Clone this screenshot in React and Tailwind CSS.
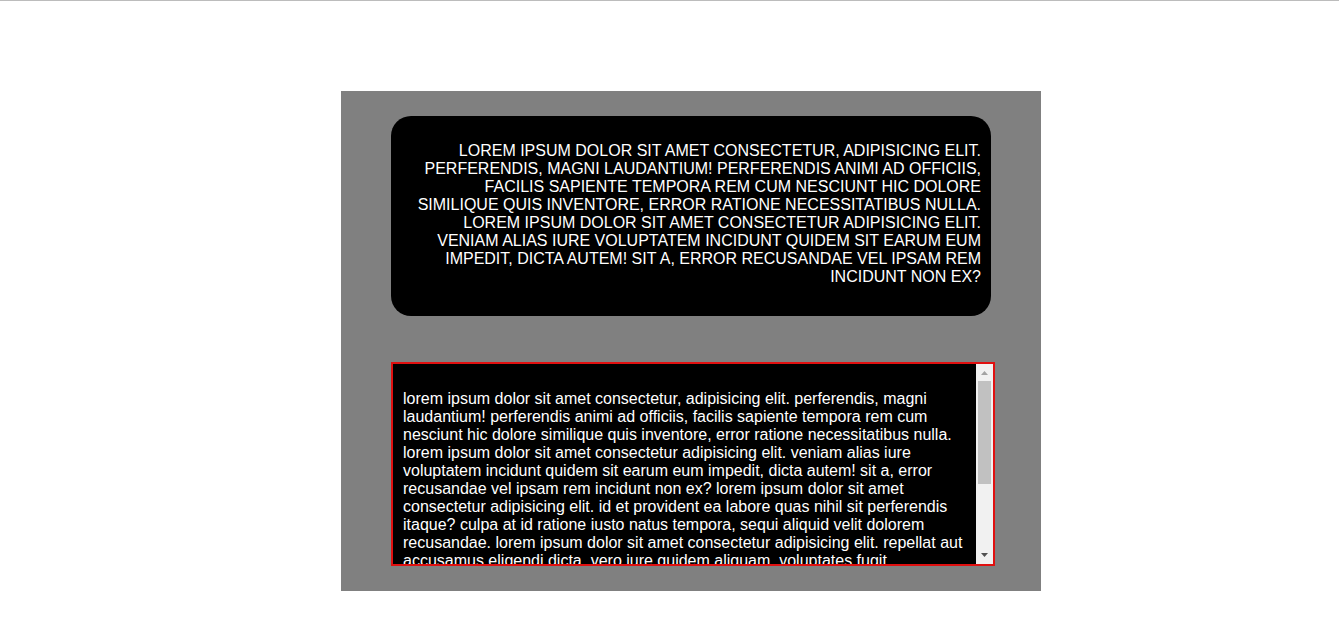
import { useRef } from "react";

function ScrollArrow({ label, points, fill, onClick }) {
  return (
    <button type="button" aria-label={label} onClick={onClick} className="flex h-[17px] w-full shrink-0 items-center justify-center">
      <svg width="17" height="17" viewBox="0 0 17 17" aria-hidden="true">
        <polygon points={points} fill={fill} />
      </svg>
    </button>
  );
}

function ScrollBox({ children }) {
  const view = useRef(null);
  const scroll = (top) => view.current.scrollBy({ top });

  return (
    <section className="flex h-[204px] w-full max-w-[604px] border-2 border-[#e01010] bg-black">
      <div ref={view} tabIndex={0} className="min-w-0 flex-1 overflow-y-auto p-[10px] outline-none [scrollbar-width:none]">
        <p className="my-4 lowercase">{children}</p>
      </div>
      <div className="flex w-[17px] shrink-0 flex-col bg-[#f1f1f1]">
        <ScrollArrow label="Scroll up" points="5,11 12,11 8.5,7" fill="#a3a3a3" onClick={() => scroll(-40)} />
        <div className="flex-1 px-[2px]">
          <div className="h-[103px] bg-[#c1c1c1]" />
        </div>
        <ScrollArrow label="Scroll down" points="5,6 12,6 8.5,10" fill="#505050" onClick={() => scroll(40)} />
      </div>
    </section>
  );
}

export default function App() {
  return (
    <div className="min-h-screen border-t border-[#bcbcbc] bg-white pt-[90px] pl-[43px] font-['Liberation_Sans',Arial,sans-serif] text-[16px] leading-[18px] text-white">
      <main className="mx-auto flex min-h-[500px] w-full max-w-[700px] flex-col gap-[46px] bg-[#808080] pt-[25px] pr-[46px] pb-[25px] pl-[50px]">
        <section className="min-h-[200px] w-full max-w-[600px] rounded-[20px] bg-black p-[10px] text-right uppercase">
          <p className="my-4">
            Lorem ipsum dolor sit amet consectetur, adipisicing elit. Perferendis, magni laudantium! Perferendis animi
            ad officiis, facilis sapiente tempora rem cum nesciunt hic dolore similique quis inventore, error ratione
            necessitatibus nulla. Lorem ipsum dolor sit amet consectetur adipisicing elit. Veniam alias iure voluptatem
            incidunt quidem sit earum eum impedit, dicta autem! Sit a, error recusandae vel ipsam rem incidunt non ex?
          </p>
        </section>
        <ScrollBox>
          Lorem ipsum dolor sit amet consectetur, adipisicing elit. Perferendis, magni laudantium! Perferendis animi ad
          officiis, facilis sapiente tempora rem cum nesciunt hic dolore similique quis inventore, error ratione
          necessitatibus nulla. Lorem ipsum dolor sit amet consectetur adipisicing elit. Veniam alias iure voluptatem
          incidunt quidem sit earum eum impedit, dicta autem! Sit a, error recusandae vel ipsam rem incidunt non ex?
          Lorem ipsum dolor sit amet consectetur adipisicing elit. Id et provident ea labore quas nihil sit perferendis
          itaque? Culpa at id ratione iusto natus tempora, sequi aliquid velit dolorem recusandae. Lorem ipsum dolor
          sit amet consectetur adipisicing elit. Repellat aut accusamus eligendi dicta, vero iure quidem aliquam,
          voluptates fugit
        </ScrollBox>
      </main>
    </div>
  );
}
